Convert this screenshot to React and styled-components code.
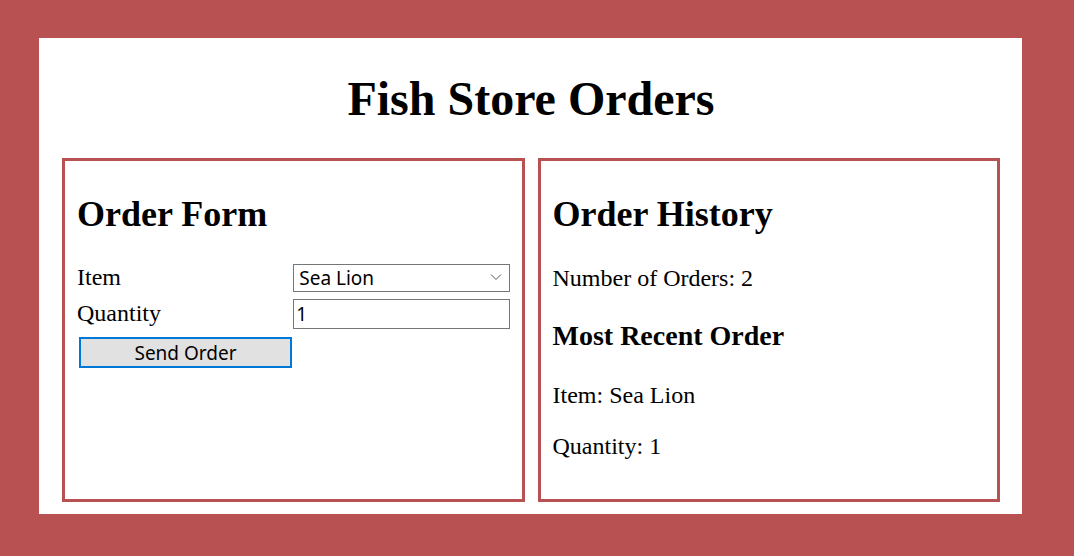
import styled, { createGlobalStyle } from "styled-components";

const GlobalStyle = createGlobalStyle`
  html, body {
    margin: 0;
    padding: 0;
    background-color: #b85252;
    font-family: "Liberation Serif", "Times New Roman", serif;
    font-size: 24px;
  }
  #root {
    min-height: 100vh;
  }
`;

const Page = styled.div`
  padding: 38px 0 43px 39px;
`;

const Sheet = styled.main`
  width: 983px;
  box-sizing: border-box;
  background-color: #ffffff;
  padding: 1px 22px 12px 23px;
`;

const Title = styled.h1`
  font-size: 48px;
  font-weight: 700;
  text-align: center;
  margin: 32px 0;
`;

const Columns = styled.div`
  display: grid;
  grid-template-columns: 1fr 1fr;
  gap: 13px;
`;

const Panel = styled.section`
  border: 3px solid #b85252;
  padding: 2px 12px 15px 12px;
`;

const PanelTitle = styled.h2`
  font-size: 36px;
  font-weight: 700;
  margin: 30px 0;
`;

const SubTitle = styled.h3`
  font-size: 28px;
  font-weight: 700;
  margin: 28px 0 30px;
`;

const Text = styled.p`
  font-size: 24px;
  margin: 24px 0;
`;

const Form = styled.form`
  display: grid;
  grid-template-columns: 1fr 1fr;
  row-gap: 7px;
  align-items: center;
  margin-top: -1px;
`;

const Label = styled.label`
  font-size: 24px;
  line-height: 27.6px;
`;

const SelectWrap = styled.div`
  position: relative;
  height: 28px;
`;

const Select = styled.select`
  appearance: none;
  width: 100%;
  height: 28px;
  box-sizing: border-box;
  border: 1px solid #767676;
  border-radius: 0;
  background: #ffffff;
  padding: 0 28px 0 5px;
  font-family: "Noto Sans", "Open Sans", sans-serif;
  font-size: 19px;
  color: #000000;
  outline: none;
`;

const Chevron = styled.svg`
  position: absolute;
  right: 8px;
  top: 9px;
  pointer-events: none;
`;

const Input = styled.input`
  width: 100%;
  height: 30px;
  box-sizing: border-box;
  border: 1px solid #767676;
  border-radius: 0;
  padding: 0 2px;
  font-family: "Noto Sans", "Open Sans", sans-serif;
  font-size: 19px;
  color: #000000;
  outline: none;
`;

const Button = styled.button`
  margin: 1px 0 0 2px;
  width: 213px;
  height: 31px;
  box-sizing: border-box;
  border: 2px solid #0078d7;
  background-color: #e1e1e1;
  border-radius: 0;
  font-family: "Noto Sans", "Open Sans", sans-serif;
  font-size: 19px;
  color: #000000;
  padding: 0;
`;

const App = () => {
  return (
    <>
      <GlobalStyle />
      <Page>
        <Sheet>
          <Title>Fish Store Orders</Title>
          <Columns>
            <Panel>
              <PanelTitle>Order Form</PanelTitle>
              <Form onSubmit={(e) => e.preventDefault()}>
                <Label htmlFor="item">Item</Label>
                <SelectWrap>
                  <Select id="item" defaultValue="Sea Lion">
                    <option>Sea Lion</option>
                    <option>Shark</option>
                    <option>Clownfish</option>
                  </Select>
                  <Chevron width="12" height="8" viewBox="0 0 12 8">
                    <path d="M1 1.5 L6 6.5 L11 1.5" fill="none" stroke="#555" strokeWidth="1" />
                  </Chevron>
                </SelectWrap>
                <Label htmlFor="qty">Quantity</Label>
                <Input id="qty" type="text" defaultValue="1" />
                <Button type="submit">Send Order</Button>
              </Form>
            </Panel>
            <Panel>
              <PanelTitle>Order History</PanelTitle>
              <Text>Number of Orders: 2</Text>
              <SubTitle>Most Recent Order</SubTitle>
              <Text>Item: Sea Lion</Text>
              <Text>Quantity: 1</Text>
            </Panel>
          </Columns>
        </Sheet>
      </Page>
    </>
  );
};

export default App;
